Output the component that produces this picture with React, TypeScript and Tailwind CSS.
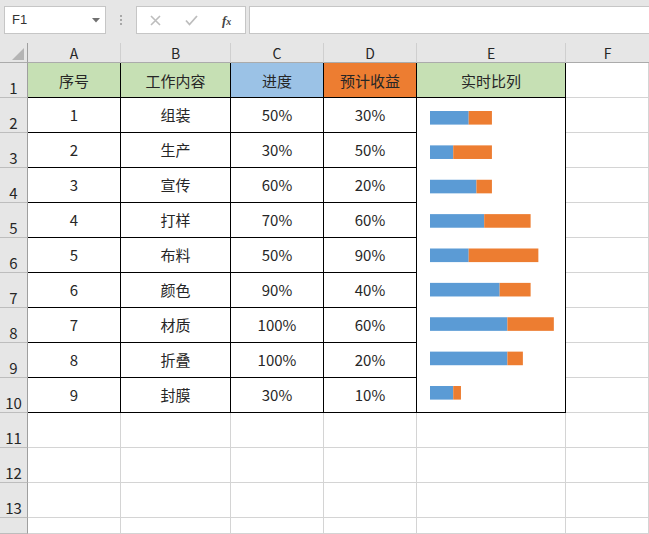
import React from "react"

const data = [
    { n: 1, task: "组装", p: 50, r: 30 },
    { n: 2, task: "生产", p: 30, r: 50 },
    { n: 3, task: "宣传", p: 60, r: 20 },
    { n: 4, task: "打样", p: 70, r: 60 },
    { n: 5, task: "布料", p: 50, r: 90 },
    { n: 6, task: "颜色", p: 90, r: 40 },
    { n: 7, task: "材质", p: 100, r: 60 },
    { n: 8, task: "折叠", p: 100, r: 20 },
    { n: 9, task: "封膜", p: 30, r: 10 },
]

const cellFont = { fontFamily: '"Noto Sans CJK SC", "Noto Sans", sans-serif' }

const RowHead = ({ n }: { n?: number }) => (
    <div className="flex items-end justify-center pb-[2px] bg-[#e6e6e6] border-r border-b border-r-[#9f9f9f] border-b-[#bdbdbd] text-[15px] leading-none text-[#262626]">
        {n}
    </div>
)

const ColHead = ({ label, last }: { label: string; last?: boolean }) => (
    <div
        className={`flex items-center justify-center bg-[#e6e6e6] border-b border-b-[#ababab] text-[14px] leading-none text-[#262626] ${last ? "" : "border-r border-r-[#cfcfcf]"
            }`}
    >
        {label}
    </div>
)

const Cell = ({ children, className = "" }: { children?: React.ReactNode; className?: string }) => (
    <div className={`flex items-center justify-center border-r border-b text-[15px] text-[#262626] ${className}`}>
        {children}
    </div>
)

const BarChart = () => {
    const scale = 0.774
    return (
        <svg width="148" height="314" className="block">
            {data.map((d, i) => {
                const y = 13 + i * 34.375
                const bw = d.p * scale
                const ow = d.r * scale
                return (
                    <g key={i}>
                        <rect x={13} y={y} width={bw} height={13.6} fill="#5b9bd5" />
                        <rect x={13 + bw} y={y} width={ow} height={13.6} fill="#ed7d31" />
                    </g>
                )
            })}
        </svg>
    )
}

export default function App() {
    return (
        <div className="w-[649px] h-[534px] overflow-hidden bg-white" style={cellFont}>
            {/* formula bar */}
            <div className="h-[43px] bg-[#e6e6e6] flex items-start pt-[6px] pl-[4px] overflow-hidden">
                <div className="shrink-0 w-[102px] h-[28px] bg-white border border-[#c6c6c6] flex items-center justify-between pl-[7px] pr-[5px]">
                    <span className="text-[13px] text-[#333]" style={{ fontFamily: '"Liberation Sans", sans-serif' }}>F1</span>
                    <svg width="8" height="5" viewBox="0 0 8 5">
                        <path d="M0 0 L8 0 L4 4.5 Z" fill="#707070" />
                    </svg>
                </div>
                <div className="shrink-0 w-[30px] h-[28px] flex flex-col items-center justify-center gap-[2px]">
                    <div className="w-[2px] h-[2px] bg-[#a8a8a8]" />
                    <div className="w-[2px] h-[2px] bg-[#a8a8a8]" />
                    <div className="w-[2px] h-[2px] bg-[#a8a8a8]" />
                </div>
                <div className="shrink-0 w-[110px] h-[28px] bg-white border border-[#c6c6c6] flex items-center pl-[13px]">
                    <svg width="11" height="11" viewBox="0 0 11 11">
                        <path d="M1 1 L10 10 M10 1 L1 10" stroke="#bdbdbd" strokeWidth="1.6" />
                    </svg>
                    <svg width="13" height="11" viewBox="0 0 13 11" className="ml-[24px]">
                        <path d="M1 5.5 L4.5 9.5 L12 1" stroke="#bdbdbd" strokeWidth="1.8" fill="none" />
                    </svg>
                    <span
                        className="ml-[24px] italic font-bold text-[13px] text-[#444] leading-none"
                        style={{ fontFamily: '"Liberation Serif", serif' }}
                    >
                        f<span className="text-[10px]">x</span>
                    </span>
                </div>
                <div className="shrink-0 ml-[3px] w-[420px] h-[28px] bg-white border border-[#c6c6c6]" />
            </div>

            {/* sheet grid */}
            <div className="grid grid-cols-[28px_93px_110px_93px_93px_149px_1fr] grid-rows-[20px_repeat(13,35px)_16px] h-[491px]">
                {/* header row */}
                <div className="flex items-end justify-end pr-[3px] pb-[2px] bg-[#e6e6e6] border-r border-b border-r-[#9f9f9f] border-b-[#ababab]">
                    <svg width="12" height="12" viewBox="0 0 12 12">
                        <path d="M12 0 L12 12 L0 12 Z" fill="#b4b4b4" />
                    </svg>
                </div>
                <ColHead label="A" />
                <ColHead label="B" />
                <ColHead label="C" />
                <ColHead label="D" />
                <ColHead label="E" />
                <ColHead label="F" last />

                {/* row 1 */}
                <RowHead n={1} />
                <Cell className="border-black bg-[#c6e0b4] pt-[3px]">序号</Cell>
                <Cell className="border-black bg-[#c6e0b4] pt-[3px]">工作内容</Cell>
                <Cell className="border-black bg-[#9bc2e6] pt-[3px]">进度</Cell>
                <Cell className="border-black bg-[#ed7d31] pt-[3px]">预计收益</Cell>
                <Cell className="border-black bg-[#c6e0b4] pt-[3px]">实时比列</Cell>
                <Cell className="border-[#d4d4d4]" />

                {/* data rows */}
                {data.map((d, i) => (
                    <React.Fragment key={d.n}>
                        <RowHead n={i + 2} />
                        <Cell className="border-black">{d.n}</Cell>
                        <Cell className="border-black">{d.task}</Cell>
                        <Cell className="border-black">{d.p}%</Cell>
                        <Cell className="border-black">{d.r}%</Cell>
                        {i === 0 && (
                            <div className="row-span-9 border-r border-b border-black">
                                <BarChart />
                            </div>
                        )}
                        <Cell className="border-[#d4d4d4]" />
                    </React.Fragment>
                ))}

                {/* empty rows */}
                {[11, 12, 13, 14].map((r) => (
                    <React.Fragment key={r}>
                        <RowHead n={r < 14 ? r : undefined} />
                        <Cell className="border-[#d4d4d4]" />
                        <Cell className="border-[#d4d4d4]" />
                        <Cell className="border-[#d4d4d4]" />
                        <Cell className="border-[#d4d4d4]" />
                        <Cell className="border-[#d4d4d4]" />
                        <Cell className="border-[#d4d4d4]" />
                    </React.Fragment>
                ))}
            </div>
        </div>
    )
}
